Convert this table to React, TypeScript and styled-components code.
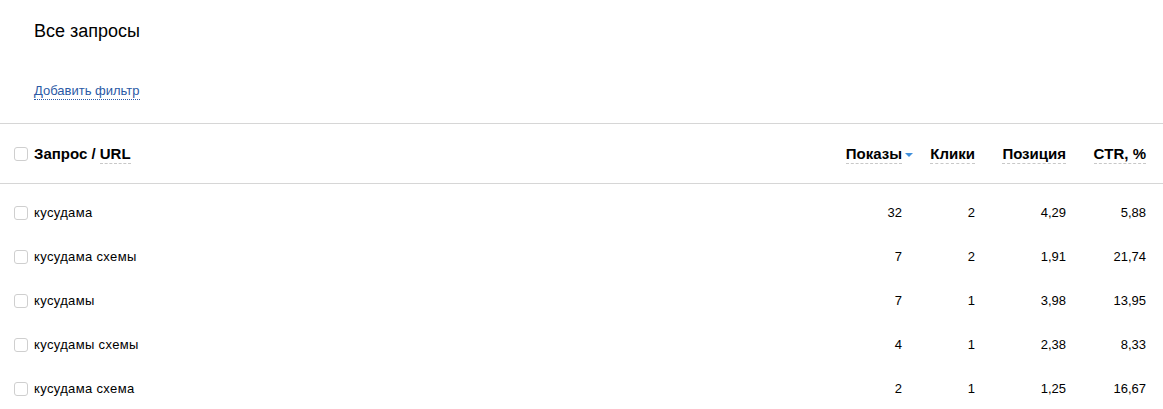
import React from "react";
import styled, { createGlobalStyle } from "styled-components";

const Global = createGlobalStyle`
  html, body { margin: 0; padding: 0; background: #fff; }
  body { font-family: Arial, "Liberation Sans", sans-serif; color: #000; }
`;

const Page = styled.div`
  width: 1163px;
`;

const Top = styled.div`
  padding: 20px 34px 0 34px;
  height: 124px;
  box-sizing: border-box;
  border-bottom: 1px solid #d6d6d6;
`;

const Title = styled.h1`
  margin: 0;
  font-size: 18px;
  font-weight: normal;
  line-height: 22px;
`;

const FilterLink = styled.a`
  display: inline-block;
  margin-top: 41px;
  font-size: 13px;
  line-height: 16px;
  color: #2b5aa5;
  text-decoration: none;
  border-bottom: 1px dotted #2b5aa5;
  cursor: pointer;
`;

const Grid = styled.div`
  display: grid;
  grid-template-columns: 1fr 90px 73px 91px 80px;
  padding: 0 17px 0 14px;
  align-items: center;
`;

const HeadRow = styled(Grid)`
  height: 59px;
  border-bottom: 1px solid #d6d6d6;
`;

const Body = styled.div`
  padding-top: 7px;
`;

const Row = styled(Grid)`
  height: 44px;
`;

const FirstCell = styled.div`
  display: flex;
  align-items: center;
`;

const Box = styled.span`
  width: 12px;
  height: 12px;
  border: 1px solid #cfcfcf;
  border-radius: 3px;
  box-sizing: content-box;
  margin: 0 6px 0 0;
  flex: none;
`;

const HeadText = styled.span`
  font-size: 15px;
  font-weight: bold;
  line-height: 18px;
`;

const Dashed = styled.span`
  border-bottom: 1px dashed #c8c8c8;
  padding-bottom: 1px;
`;

const HeadNum = styled.div`
  text-align: right;
  font-size: 15px;
  font-weight: bold;
  line-height: 18px;
`;

const SortLabel = styled.span`
  position: relative;
  border-bottom: 1px dashed #c8c8c8;
  padding-bottom: 1px;
`;

const Arrow = styled.span`
  position: absolute;
  right: -11px;
  top: 8px;
  width: 0;
  height: 0;
  border-left: 4px solid transparent;
  border-right: 4px solid transparent;
  border-top: 4px solid #3f8fdc;
`;

const Query = styled.span`
  font-size: 13px;
  line-height: 16px;
  letter-spacing: 0.35px;
`;

const Num = styled.div`
  text-align: right;
  font-size: 13px;
  line-height: 16px;
`;

const rows = [
  ["кусудама", "32", "2", "4,29", "5,88"],
  ["кусудама схемы", "7", "2", "1,91", "21,74"],
  ["кусудамы", "7", "1", "3,98", "13,95"],
  ["кусудамы схемы", "4", "1", "2,38", "8,33"],
  ["кусудама схема", "2", "1", "1,25", "16,67"],
];

export default function App() {
  return (
    <Page>
      <Global />
      <Top>
        <Title>Все запросы</Title>
        <FilterLink>Добавить фильтр</FilterLink>
      </Top>
      <HeadRow>
        <FirstCell>
          <Box />
          <HeadText>
            Запрос / <Dashed>URL</Dashed>
          </HeadText>
        </FirstCell>
        <HeadNum>
          <SortLabel>
            Показы
            <Arrow />
          </SortLabel>
        </HeadNum>
        <HeadNum>
          <Dashed>Клики</Dashed>
        </HeadNum>
        <HeadNum>
          <Dashed>Позиция</Dashed>
        </HeadNum>
        <HeadNum>
          <Dashed>CTR, %</Dashed>
        </HeadNum>
      </HeadRow>
      <Body>
        {rows.map((r) => (
          <Row key={r[0]}>
            <FirstCell>
              <Box />
              <Query>{r[0]}</Query>
            </FirstCell>
            <Num>{r[1]}</Num>
            <Num>{r[2]}</Num>
            <Num>{r[3]}</Num>
            <Num>{r[4]}</Num>
          </Row>
        ))}
      </Body>
    </Page>
  );
}
